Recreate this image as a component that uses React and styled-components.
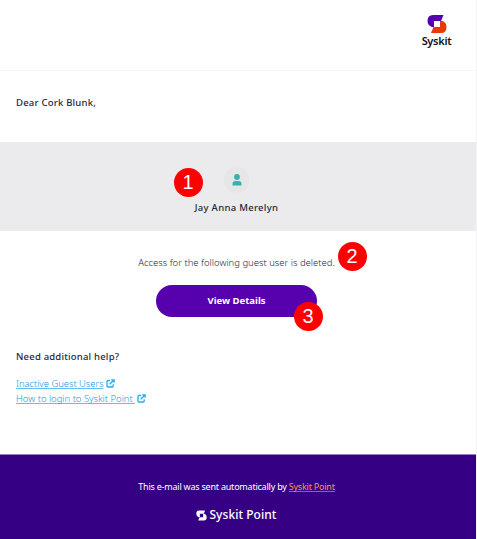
import React from 'react';
import styled, { createGlobalStyle } from 'styled-components';

const GlobalStyle = createGlobalStyle`
  * { box-sizing: border-box; }
  body { margin: 0; background: #fff; }
`;

const Email = styled.main`
  position: relative;
  width: 477px;
  height: 539px;
  display: flex;
  flex-direction: column;
  overflow: hidden;
  background: #fff;
  border-right: 1px solid #f3f3f5;
  font-family: 'Noto Sans', sans-serif;
  font-size: 9.5px;
  line-height: 14px;
  color: #25253c;
`;

const Header = styled.header`
  height: 71px;
  padding: 14px 20px 0 0;
  display: flex;
  justify-content: flex-end;
  border-bottom: 1px solid #f5f5f5;
`;

const Brand = styled.div`
  width: 39px;
  height: 35px;
  display: flex;
  flex-direction: column;
  align-items: center;
`;

const BrandName = styled.span`
  font-size: 11px;
  line-height: 14px;
  font-weight: 600;
  letter-spacing: -0.3px;
  color: #111;
  white-space: nowrap;
`;

const Text = styled.span`
  display: block;
  white-space: nowrap;
  font-size: ${p => p.$size || '9.5px'};
  font-weight: ${p => p.$weight || 300};
  letter-spacing: ${p => p.$spacing || '0'};
`;

const Greeting = styled.section`
  height: 71px;
  padding: 25px 16px 0;
`;

const GuestBand = styled.section`
  height: 89px;
  padding: 25px 3px 0 0;
  display: flex;
  flex-direction: column;
  align-items: center;
  gap: 8px;
  background: #ebebed;
`;

const Avatar = styled.div`
  width: 25px;
  height: 26px;
  display: grid;
  place-items: center;
  border-radius: 50%;
  background: #e6e6e6;
`;

const Message = styled.section`
  height: 119px;
  padding: 25px 3px 0 0;
  display: flex;
  flex-direction: column;
  align-items: center;
  gap: 15px;
`;

const Button = styled.button`
  width: 161px;
  height: 32px;
  padding: 0;
  border: 0;
  border-radius: 16px;
  background: #5700ae;
  color: #fff;
  font: 700 9.5px/14px 'Noto Sans', sans-serif;
`;

const Help = styled.section`
  height: 104px;
  padding: 0 16px;
`;

const Links = styled.div`
  margin-top: 12px;
  display: flex;
  flex-direction: column;
`;

const LinkRow = styled.div`
  display: flex;
  align-items: center;
  gap: 2px;
  height: 15px;
`;

const Link = styled.a`
  color: ${p => p.$color || '#1496e4'};
  font-weight: ${p => p.$weight || 300};
  letter-spacing: ${p => p.$spacing || 'inherit'};
  text-decoration: underline;
  text-decoration-color: ${p => p.$line || '#62c0f4'};
  text-decoration-thickness: 1px;
  text-underline-offset: 1px;
  text-decoration-skip-ink: none;
  white-space: pre;
`;

const Footer = styled.footer`
  flex: 1;
  padding: 25px 3px 0 0;
  display: flex;
  flex-direction: column;
  align-items: center;
  gap: 13px;
  border-top: 1px solid #9a80c3;
  background: #360085;
  color: #fff;
`;

const FooterBrand = styled.div`
  display: flex;
  align-items: center;
  gap: 2px;
  height: 16px;
`;

const FooterName = styled(BrandName)`
  color: #fff;
  font-size: 12px;
  font-weight: 500;
  line-height: 16px;
  letter-spacing: 0.05px;
`;

const Marker = styled.span`
  position: absolute;
  left: ${p => p.$x}px;
  top: ${p => p.$y}px;
  width: 29px;
  height: 29px;
  display: grid;
  place-items: center;
  border-radius: 50%;
  background: #f00;
  color: #fff;
  font: 20px/29px 'Liberation Sans', sans-serif;
`;

const MarkSvg = styled.svg`
  flex-shrink: 0;
`;

function Mark({ size, top, bottom }) {
  return (
    <MarkSvg width={size} height={size} viewBox="0 0 20 20">
      <path d="M6 1H16.5L14 7H7V13H5Q.5 11.5 .5 7Q.5 1 6 1Z" fill={top} />
      <path d="M14 19H4L6.5 13H13V7H15.5Q19.5 8.5 19.5 13Q19.5 19 14 19Z" fill={bottom} />
    </MarkSvg>
  );
}

function External() {
  return (
    <svg width="9" height="9" viewBox="0 0 9 9" fill="none" stroke="#27a9ec" strokeWidth="1.3">
      <path d="M4 1.5H2Q1 1.5 1 2.5V7Q1 8 2 8H6.2Q7.2 8 7.2 7V5.2M3.6 5.3L7.7 1.2M5.2 .8H8.1V3.8" />
    </svg>
  );
}

export default function App() {
  return (
    <>
      <GlobalStyle />
      <Email>
        <Header>
          <Brand>
            <Mark size={20} top="#5700ae" bottom="#e63a0a" />
            <BrandName>Syskit</BrandName>
          </Brand>
        </Header>
        <Greeting>
          <Text $weight={500} $spacing="0.22px">Dear Cork Blunk,</Text>
        </Greeting>
        <GuestBand>
          <Avatar>
            <svg width="10" height="12" viewBox="0 0 10 12" fill="#35b1b5">
              <circle cx="5" cy="3" r="2.9" />
              <path d="M.5 11.5V10Q.5 7 3.5 7H6.5Q9.5 7 9.5 10V11.5Z" />
            </svg>
          </Avatar>
          <Text $weight={500} $spacing="0.3px">Jay Anna Merelyn</Text>
        </GuestBand>
        <Message>
          <Text>Access for the following guest user is deleted.</Text>
          <Button>View Details</Button>
        </Message>
        <Help>
          <Text $weight={500} $spacing="0.2px">Need additional help?</Text>
          <Links>
            <LinkRow><Link $spacing="-0.05px">Inactive Guest Users</Link><External /></LinkRow>
            <LinkRow><Link $spacing="-0.02px">{'How to login to Syskit Point '}</Link><External /></LinkRow>
          </Links>
        </Help>
        <Footer>
          <Text $weight={400} $size="9px" $spacing="-0.22px">
            This e-mail was sent automatically by <Link $weight={400} $color="#ff9048" $line="#b45b68">Syskit Point</Link>
          </Text>
          <FooterBrand>
            <Mark size={11} top="#fff" bottom="#fff" />
            <FooterName>Syskit Point</FooterName>
          </FooterBrand>
        </Footer>
        <Marker $x={173.5} $y={167.5}>1</Marker>
        <Marker $x={337.5} $y={241.5}>2</Marker>
        <Marker $x={293.5} $y={301.5}>3</Marker>
      </Email>
    </>
  );
}
